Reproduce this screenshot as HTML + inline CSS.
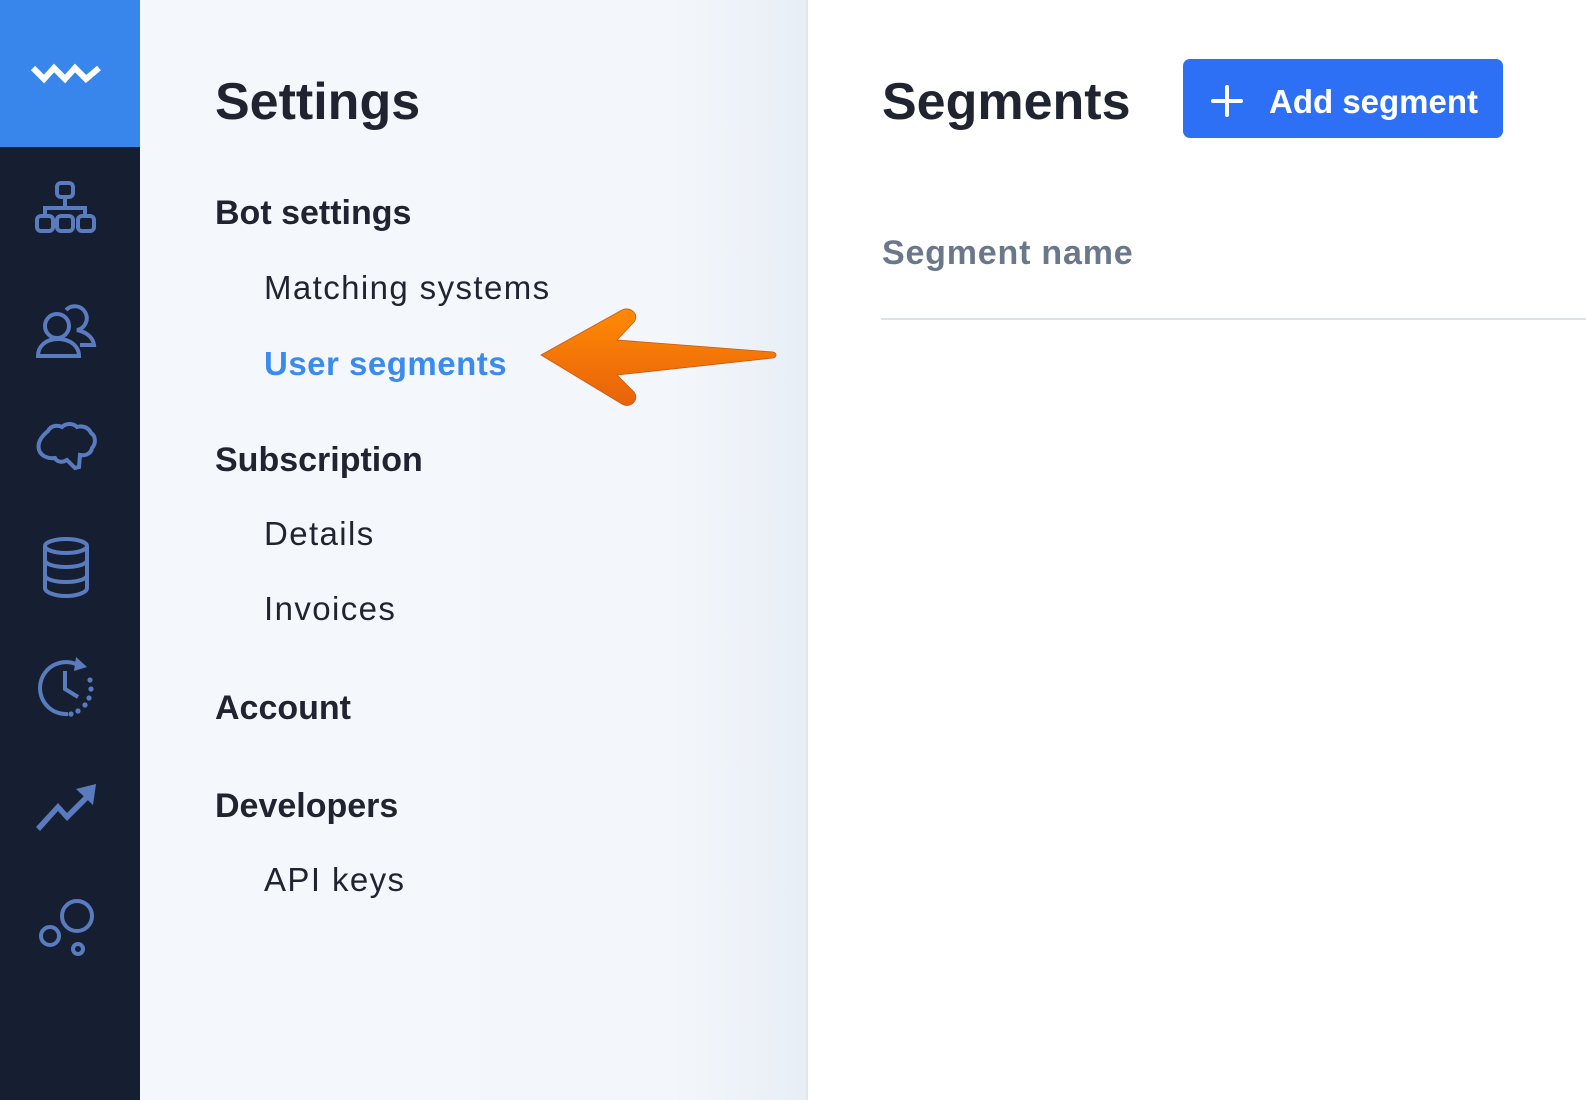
<!DOCTYPE html>
<html><head><meta charset="utf-8"><style>
html,body{margin:0;padding:0;width:1586px;height:1100px;overflow:hidden;background:#fff;font-family:"Liberation Sans",sans-serif;}
.a{position:absolute;white-space:nowrap;line-height:1;}
#nav{position:absolute;left:0;top:0;width:140px;height:1100px;background:#161f31;}
#logo{position:absolute;left:0;top:0;width:140px;height:147px;background:#3886ec;}
#panel{position:absolute;left:140px;top:0;width:666px;height:1100px;background:linear-gradient(90deg,#f4f7fb 0%,#f3f7fb 80%,#e8eef6 100%);border-right:2px solid #dfe6ef;}
.h{font-weight:bold;color:#1f2430;}
.i{color:#1f2430;font-size:33px;letter-spacing:1.4px;}
</style></head><body>
<div id="nav">
<div id="logo"><svg width="140" height="147" style="position:absolute;left:0;top:0"><polyline points="33,68 44,79 54,68 65,79 75,68 86,79 99,68" fill="none" stroke="#fff" stroke-width="6"/></svg></div>
<svg style="position:absolute;left:0;top:0" width="140" height="1100" fill="none" stroke="#5b7bbf" stroke-width="4">
<rect x="57" y="183" width="16" height="14" rx="4"/>
<path d="M65 197v11M45 217v-9h40v9"/>
<rect x="37" y="216" width="16" height="15" rx="4"/><rect x="57" y="216" width="16" height="15" rx="4"/><rect x="78" y="216" width="16" height="15" rx="4"/>
<circle cx="57" cy="326" r="12"/>
<path d="M38 356c0-10 8-17 20-17s21 7 21 17z"/>
<path d="M66 310a12 12 0 1 1 11 20c9 2 16 7 17 15H80"/>
<path d="M48 431c3-6 10-6 14-4 4-4 11-4 15 0 6-2 12 1 14 6 5 3 5 11 1 15-1 6-7 8-12 7l-1 12-4 1-8-8c-5 3-10 2-12-2-7 1-14-2-16-8-2-8 3-14 9-19z"/>
<ellipse cx="66" cy="546" rx="21" ry="7"/>
<path d="M45 546v42c0 4 9 8 21 8s21-4 21-8V546M45 560c0 4 9 7 21 7s21-3 21-7M45 575c0 4 9 7 21 7s21-3 21-7"/>
<path d="M68 714A26 26 0 1 1 78 665"/>
<path d="M65 671v18l13 8"/>
</svg>
<svg style="position:absolute;left:0;top:0" width="140" height="1100" fill="#5b7bbf">
<path d="M76 657l11 10-13 4z"/>
<circle cx="90" cy="680" r="2.6"/><circle cx="91" cy="689" r="2.6"/><circle cx="89" cy="698" r="2.6"/><circle cx="85" cy="705" r="2.6"/><circle cx="78" cy="711" r="2.6"/><circle cx="71" cy="714" r="2.6"/>
<path d="M36 827l22-24 9 10 18-18 4 4 -22 22-9-10-18 20z"/>
<path d="M96 784l-3 21-17-16z"/>
</svg>
<svg style="position:absolute;left:0;top:0" width="140" height="1100" fill="none" stroke="#5b7bbf" stroke-width="4">
<circle cx="77" cy="916" r="15"/><circle cx="50" cy="936" r="9"/><circle cx="78" cy="949" r="5"/>
</svg>
</div>
<div id="panel"></div>
<div class="a h" style="left:215px;top:76px;font-size:52px">Settings</div>
<div class="a h" style="left:215px;top:196px;font-size:34px">Bot settings</div>
<div class="a i" style="left:264px;top:271px">Matching systems</div>
<div class="a" style="left:264px;top:347px;font-size:33px;font-weight:bold;color:#3b8bee;letter-spacing:0.5px">User segments</div>
<div class="a h" style="left:215px;top:443px;font-size:34px">Subscription</div>
<div class="a i" style="left:264px;top:517px">Details</div>
<div class="a i" style="left:264px;top:592px">Invoices</div>
<div class="a h" style="left:215px;top:691px;font-size:34px">Account</div>
<div class="a h" style="left:215px;top:789px;font-size:34px">Developers</div>
<div class="a i" style="left:264px;top:863px">API keys</div>
<svg style="position:absolute;left:530px;top:300px" width="260" height="115" viewBox="530 300 260 115">
<defs><linearGradient id="g" x1="0" y1="0" x2="0" y2="1"><stop offset="0" stop-color="#ff8a05"/><stop offset="1" stop-color="#e8620a"/></linearGradient></defs>
<path d="M541 355L622 310c8-4 18 4 12 12l-17 18 156 12c4 1 4 5 0 6l-156 17 17 17c6 8-4 17-12 12z" fill="url(#g)" stroke="#c85a10" stroke-width="0.8"/>
</svg>
<div class="a h" style="left:882px;top:76px;font-size:52px">Segments</div>
<div style="position:absolute;left:1183px;top:59px;width:320px;height:79px;background:#2e70f5;border-radius:7px"></div>
<svg style="position:absolute;left:1210px;top:84px" width="34" height="34"><path d="M17 3v28M3 17h28" stroke="#fff" stroke-width="4" stroke-linecap="round"/></svg>
<div class="a" style="left:1269px;top:85px;font-size:33px;color:#fff;font-weight:bold">Add segment</div>
<div class="a" style="left:882px;top:236px;font-size:34px;color:#6b788b;font-weight:bold;letter-spacing:0.8px">Segment name</div>
<div style="position:absolute;left:881px;top:318px;width:705px;height:2px;background:#dde2e8"></div>
</body></html>
